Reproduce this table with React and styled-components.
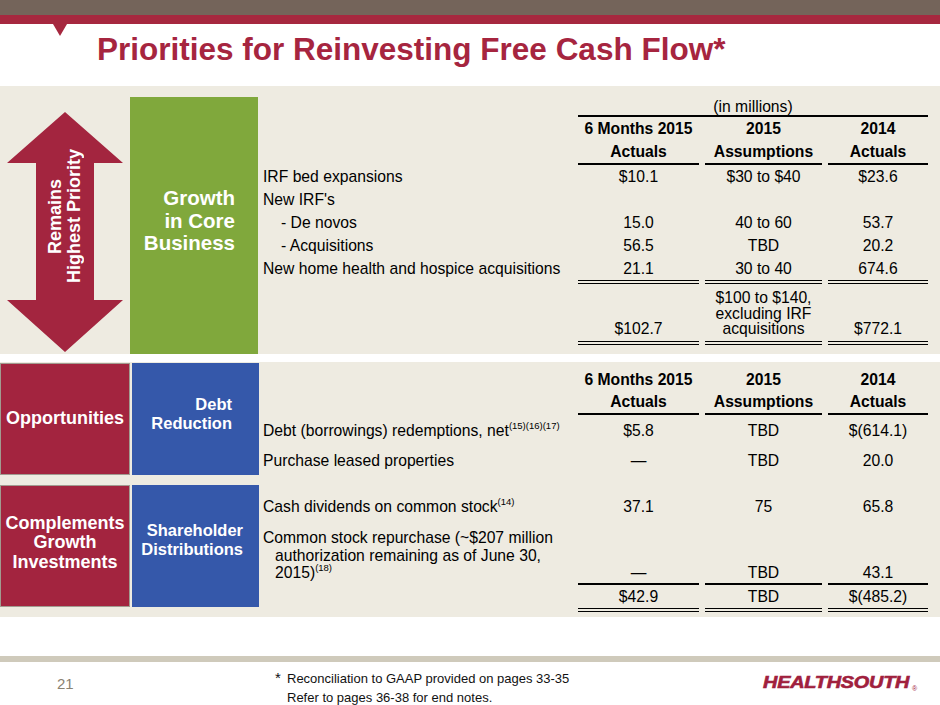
import React from 'react';
import styled, { createGlobalStyle } from 'styled-components';

const GlobalStyle = createGlobalStyle`
  html, body { margin: 0; padding: 0; background: #fff; }
  body { font-family: "Liberation Sans", Arial, sans-serif; color: #000; }
  * { box-sizing: border-box; }
`;

const Page = styled.div`
  width: 940px;
  height: 705px;
  overflow: hidden;
  display: flex;
  flex-direction: column;
  background: #fff;
`;

const TopBar = styled.div`
  height: 15px;
  background: #74645a;
`;

const RedBand = styled.div`
  position: relative;
  height: 9px;
  background: #a6283f;
`;

const Notch = styled.div`
  position: absolute;
  left: 53px;
  top: 9px;
  width: 0;
  height: 0;
  border-left: 7.5px solid transparent;
  border-right: 7.5px solid transparent;
  border-top: 12px solid #a6283f;
`;

const TitleArea = styled.header`
  height: 62px;
  display: flex;
  align-items: center;
  padding: 0 0 10px 97px;
`;

const Title = styled.h1`
  margin: 0;
  font-size: 31.5px;
  line-height: 1;
  font-weight: 700;
  color: #a6253f;
  white-space: nowrap;
`;

const Panel = styled.section`
  background: #eeebe1;
  display: flex;
`;

const UpperPanel = styled(Panel)`
  height: 268px;
`;

const LowerPanel = styled(Panel)`
  margin-top: 8px;
  flex-direction: column;
  padding: 1px 0 5px 0;
  gap: 10px;
`;

const ArrowCol = styled.div`
  width: 130px;
  flex: none;
  padding: 26px 0 0 7px;
`;

const ArrowWrap = styled.div`
  display: grid;
  width: 116px;
  height: 240px;
  & > * { grid-area: 1 / 1; }
`;

const ArrowText = styled.div`
  align-self: center;
  justify-self: center;
  writing-mode: vertical-rl;
  transform: rotate(180deg);
  margin-bottom: 32px;
  color: #fff;
  font-weight: 700;
  font-size: 18px;
  line-height: 19px;
  text-align: center;
  white-space: nowrap;
`;

const GreenBox = styled.div`
  width: 128px;
  flex: none;
  margin-top: 11px;
  height: 257px;
  background: #80a83c;
  display: flex;
  flex-direction: column;
  justify-content: center;
  align-items: flex-end;
  padding: 0 23px 9px 0;
  color: #fff;
  font-weight: 700;
  font-size: 20.5px;
  line-height: 22.5px;
  text-align: right;
`;

const TableArea = styled.div`
  margin-left: ${p => p.$ml || 5}px;
  padding-top: ${p => p.$pt || 0}px;
  font-size: 15.7px;
`;

const Row = styled.div`
  display: grid;
  grid-template-columns: 309px 121px 117px 100px;
  column-gap: 6px;
  min-height: ${p => p.$h || 23}px;
`;

const rules = {
  single: '2px solid #000',
  double: '4px double #000',
};

const Cell = styled.div`
  display: flex;
  align-items: ${p => (p.$bottom ? 'flex-end' : p.$top ? 'flex-start' : 'center')};
  justify-content: ${p => (p.$left ? 'flex-start' : 'center')};
  text-align: ${p => (p.$left ? 'left' : 'center')};
  grid-column: ${p => p.$span || 'auto'};
  padding: ${p => p.$pad || '0'};
  font-weight: ${p => (p.$bold ? 700 : 400)};
  line-height: ${p => p.$lh || 23}px;
  border-bottom: ${p => (p.$rule ? rules[p.$rule] : 'none')};
  white-space: nowrap;
`;

const Label = styled(Cell).attrs({ $left: true })`
  padding-left: ${p => p.$indent || 0}px;
`;

const Hanging = styled.div`
  padding: 2px 0 3px 12px;
  text-indent: -12px;
  line-height: 17.5px;
  white-space: nowrap;
`;

const Sup = styled.sup`
  font-size: 9.5px;
  line-height: 0;
  vertical-align: 7px;
`;

const Band = styled.div`
  display: flex;
  align-items: flex-start;
`;

const RedBox = styled.div`
  width: 130px;
  flex: none;
  height: ${p => p.$h}px;
  background: #a3243f;
  border: 1.5px solid #a19b90;
  display: flex;
  align-items: center;
  justify-content: center;
  text-align: center;
  padding-bottom: ${p => p.$pb || 0}px;
  color: #fff;
  font-weight: 700;
  font-size: 18px;
  line-height: 19.5px;
`;

const BlueBox = styled.div`
  width: 127px;
  flex: none;
  margin-left: 2px;
  height: ${p => p.$h}px;
  background: #3558aa;
  display: flex;
  flex-direction: column;
  justify-content: center;
  align-items: flex-end;
  text-align: right;
  padding-right: ${p => p.$pr}px;
  padding-bottom: ${p => p.$pb || 0}px;
  color: #fff;
  font-weight: 700;
  font-size: 16.5px;
  line-height: 19px;
`;

const Footer = styled.footer`
  margin-top: auto;
`;

const FooterRule = styled.div`
  height: 6px;
  background: #cfcabb;
`;

const FooterBar = styled.div`
  height: 43px;
  display: grid;
  grid-template-columns: 275px 488px 1fr;
  align-items: start;
`;

const PageNum = styled.div`
  padding: 13px 0 0 57px;
  font-size: 15px;
  line-height: 18px;
  color: #8a8272;
`;

const Notes = styled.div`
  padding-top: 6px;
  font-size: 13px;
  line-height: 19px;
  color: #111;
  white-space: nowrap;
`;

const Star = styled.span`
  display: inline-block;
  width: 12px;
  font-size: 15px;
`;

const NoteLine = styled.div`
  padding-left: ${p => (p.$indent ? 12 : 0)}px;
`;

const Logo = styled.div`
  padding-top: 11px;
  color: #a0203d;
  white-space: nowrap;
  line-height: 20px;
`;

const LogoWord = styled.span`
  display: inline-block;
  font-size: 17px;
  font-weight: 700;
  font-style: italic;
  letter-spacing: -0.2px;
  -webkit-text-stroke: 0.6px #a0203d;
  transform: scaleX(1.17);
  transform-origin: left center;
`;

const Reg = styled.span`
  display: inline-block;
  margin-left: 24px;
  font-size: 7px;
  vertical-align: -3px;
`;

function Arrow() {
  return (
    <ArrowWrap>
      <svg width="116" height="240" viewBox="0 0 116 240">
        <path
          d="M58 0 L116 51 L87 51 L87 188 L116 188 L58 240 L0 188 L29 188 L29 51 L0 51 Z"
          fill="#a3253f"
        />
      </svg>
      <ArrowText>
        Remains
        <br />
        Highest Priority
      </ArrowText>
    </ArrowWrap>
  );
}

export default function App() {
  return (
    <>
      <GlobalStyle />
      <Page>
        <TopBar />
        <RedBand>
          <Notch />
        </RedBand>
        <TitleArea>
          <Title>Priorities for Reinvesting Free Cash Flow*</Title>
        </TitleArea>

        <UpperPanel>
          <ArrowCol>
            <Arrow />
          </ArrowCol>
          <GreenBox>
            <div>Growth</div>
            <div>in Core</div>
            <div>Business</div>
          </GreenBox>
          <TableArea $pt={12}>
            <Row $h={17}>
              <Cell $span="2 / 5" $lh={17} $rule="single">(in millions)</Cell>
            </Row>
            <Row>
              <div />
              <Cell $bold $rule="single">6 Months 2015<br />Actuals</Cell>
              <Cell $bold $rule="single">2015<br />Assumptions</Cell>
              <Cell $bold $rule="single">2014<br />Actuals</Cell>
            </Row>
            <Row>
              <Label>IRF bed expansions</Label>
              <Cell>$10.1</Cell>
              <Cell>$30 to $40</Cell>
              <Cell>$23.6</Cell>
            </Row>
            <Row>
              <Label>New IRF's</Label>
              <Cell />
              <Cell />
              <Cell />
            </Row>
            <Row>
              <Label $indent={18}>- De novos</Label>
              <Cell>15.0</Cell>
              <Cell>40 to 60</Cell>
              <Cell>53.7</Cell>
            </Row>
            <Row>
              <Label $indent={18}>- Acquisitions</Label>
              <Cell>56.5</Cell>
              <Cell>TBD</Cell>
              <Cell>20.2</Cell>
            </Row>
            <Row>
              <Label $top>New home health and hospice acquisitions</Label>
              <Cell $top $rule="double">21.1</Cell>
              <Cell $top $rule="double">30 to 40</Cell>
              <Cell $top $rule="double">674.6</Cell>
            </Row>
            <Row>
              <div />
              <Cell $bottom $lh={15.5} $pad="6px 0 4px" $rule="double">$102.7</Cell>
              <Cell $bottom $lh={15.5} $pad="6px 0 4px" $rule="double">
                $100 to $140,<br />excluding IRF<br />acquisitions
              </Cell>
              <Cell $bottom $lh={15.5} $pad="6px 0 4px" $rule="double">$772.1</Cell>
            </Row>
          </TableArea>
        </UpperPanel>

        <LowerPanel>
          <Band>
            <RedBox $h={112}>Opportunities</RedBox>
            <BlueBox $h={112} $pr={27} $pb={10}>
              <div>Debt</div>
              <div>Reduction</div>
            </BlueBox>
            <TableArea $ml={4} $pt={6}>
              <Row>
                <div />
                <Cell $bold $lh={22} $rule="single">6 Months 2015<br />Actuals</Cell>
                <Cell $bold $lh={22} $rule="single">2015<br />Assumptions</Cell>
                <Cell $bold $lh={22} $rule="single">2014<br />Actuals</Cell>
              </Row>
              <Row $h={30}>
                <Label>
                  <span>Debt (borrowings) redemptions, net<Sup>(15)(16)(17)</Sup></span>
                </Label>
                <Cell>$5.8</Cell>
                <Cell>TBD</Cell>
                <Cell>$(614.1)</Cell>
              </Row>
              <Row $h={30}>
                <Label>Purchase leased properties</Label>
                <Cell>—</Cell>
                <Cell>TBD</Cell>
                <Cell>20.0</Cell>
              </Row>
            </TableArea>
          </Band>

          <Band>
            <RedBox $h={122} $pb={6}>Complements Growth Investments</RedBox>
            <BlueBox $h={122} $pr={16} $pb={12}>
              <div>Shareholder</div>
              <div>Distributions</div>
            </BlueBox>
            <TableArea $ml={4}>
              <Row $h={42}>
                <Label>
                  <span>Cash dividends on common stock<Sup>(14)</Sup></span>
                </Label>
                <Cell>37.1</Cell>
                <Cell>75</Cell>
                <Cell>65.8</Cell>
              </Row>
              <Row>
                <Label $top $lh={17.5}>
                  <Hanging>
                    Common stock repurchase (~$207 million<br />
                    authorization remaining as of June 30,<br />
                    2015)<Sup>(18)</Sup>
                  </Hanging>
                </Label>
                <Cell $bottom $lh={17.5} $pad="0 0 1px" $rule="single">—</Cell>
                <Cell $bottom $lh={17.5} $pad="0 0 1px" $rule="single">TBD</Cell>
                <Cell $bottom $lh={17.5} $pad="0 0 1px" $rule="single">43.1</Cell>
              </Row>
              <Row $h={24}>
                <div />
                <Cell $rule="double">$42.9</Cell>
                <Cell $rule="double">TBD</Cell>
                <Cell $rule="double">$(485.2)</Cell>
              </Row>
            </TableArea>
          </Band>
        </LowerPanel>

        <Footer>
          <FooterRule />
          <FooterBar>
            <PageNum>21</PageNum>
            <Notes>
              <NoteLine><Star>*</Star>Reconciliation to GAAP provided on pages 33-35</NoteLine>
              <NoteLine $indent>Refer to pages 36-38 for end notes.</NoteLine>
            </Notes>
            <Logo>
              <LogoWord>HEALTHSOUTH</LogoWord>
              <Reg>®</Reg>
            </Logo>
          </FooterBar>
        </Footer>
      </Page>
    </>
  );
}
